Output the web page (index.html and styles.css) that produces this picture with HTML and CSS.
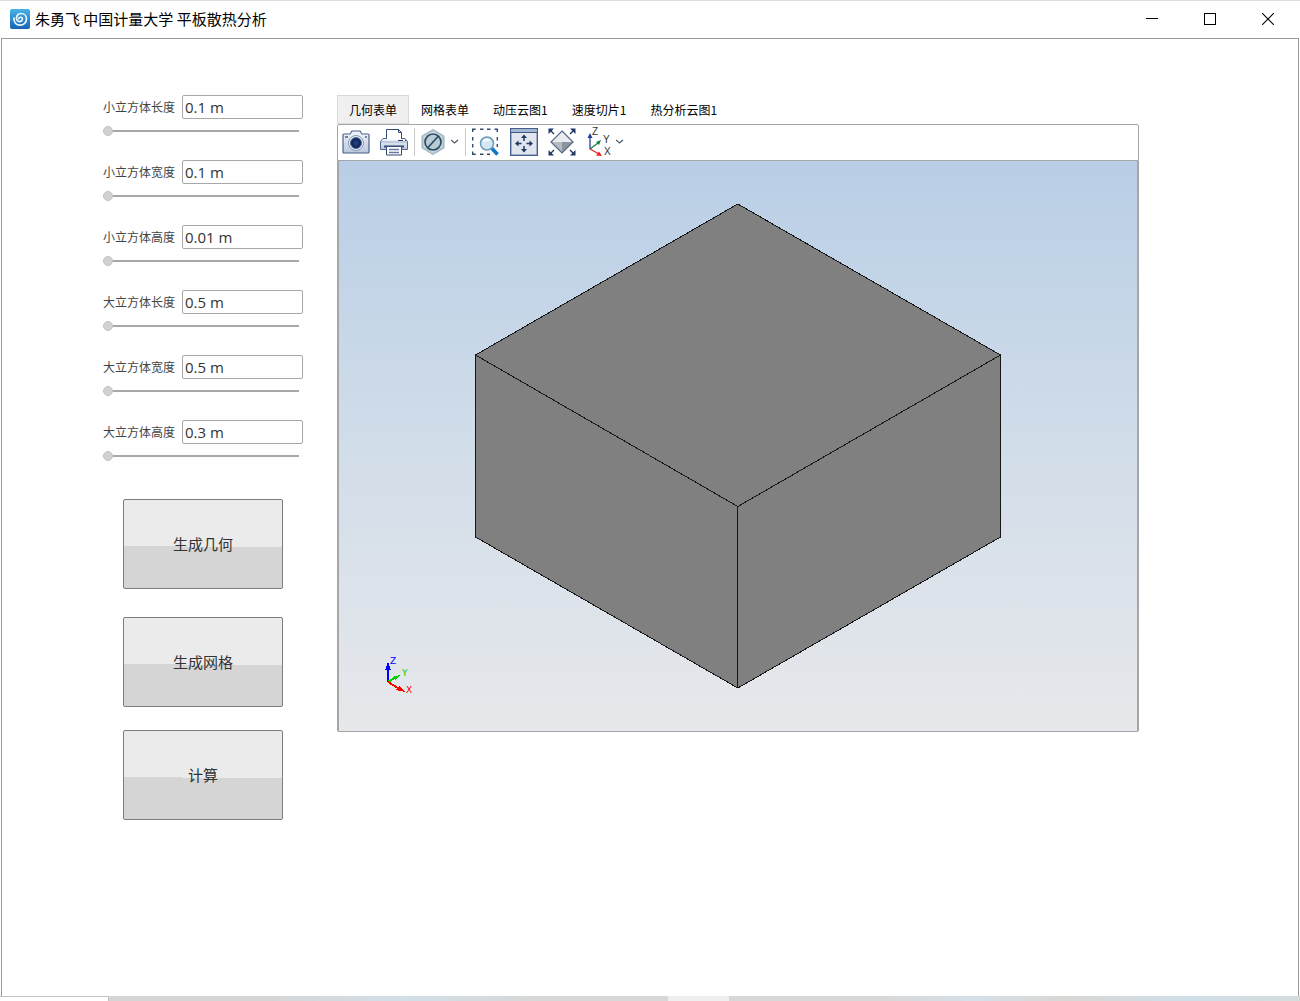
FILE: index.html
```html
<!DOCTYPE html>
<html lang="zh-CN">
<head>
<meta charset="utf-8">
<title>朱勇飞 中国计量大学 平板散热分析</title>
<link rel="stylesheet" href="styles.css">
</head>
<body>
<div class="window">
  <header class="titlebar">
    <svg class="app-icon" width="20" height="20" viewBox="0 0 20 20" aria-hidden="true">
      <defs><linearGradient id="appBg" x1="0" y1="0" x2="0" y2="1"><stop offset="0" stop-color="#48b3e6"/><stop offset="1" stop-color="#1464b4"/></linearGradient></defs>
      <rect width="20" height="20" rx="2" fill="url(#appBg)"/>
      <path d="M8.800 9.600c.2-1.900 3.700-1.900 3.600.5-.1 2.300-3.300 3.300-5 1.500C5.200 9 7 4.500 11 4.500c3.300 0 5.500 2.400 5.500 5.300 0 3.700-2.800 6.400-6.500 6.400-3.800 0-6.400-2.800-6-7" fill="none" stroke="#e8f6ff" stroke-width="1.700" stroke-linecap="round"/>
    </svg>
    <h1 class="title">朱勇飞 中国计量大学 平板散热分析</h1>
    <div class="window-controls">
      <button class="window-button" aria-label="最小化"><svg width="12" height="12" viewBox="0 0 12 12"><path d="M0 5.500h12" stroke="#000"/></svg></button>
      <button class="window-button" aria-label="最大化"><svg width="12" height="12" viewBox="0 0 12 12"><rect x=".5" y=".5" width="11" height="11" fill="none" stroke="#000"/></svg></button>
      <button class="window-button" aria-label="关闭"><svg width="12" height="12" viewBox="0 0 12 12"><path d="M0 0l12 12M12 0L0 12" stroke="#000" stroke-width="1.100"/></svg></button>
    </div>
  </header>

  <main class="client">
    <form class="sidebar">
      <div class="fields">
        <div class="field"><label class="field-label" for="small-length">小立方体长度</label><input class="field-input" id="small-length" type="text" value="0.1 m"><input class="slider" type="range" value="0" aria-label="小立方体长度"></div>
        <div class="field"><label class="field-label" for="small-width">小立方体宽度</label><input class="field-input" id="small-width" type="text" value="0.1 m"><input class="slider" type="range" value="0" aria-label="小立方体宽度"></div>
        <div class="field"><label class="field-label" for="small-height">小立方体高度</label><input class="field-input" id="small-height" type="text" value="0.01 m"><input class="slider" type="range" value="0" aria-label="小立方体高度"></div>
        <div class="field"><label class="field-label" for="large-length">大立方体长度</label><input class="field-input" id="large-length" type="text" value="0.5 m"><input class="slider" type="range" value="0" aria-label="大立方体长度"></div>
        <div class="field"><label class="field-label" for="large-width">大立方体宽度</label><input class="field-input" id="large-width" type="text" value="0.5 m"><input class="slider" type="range" value="0" aria-label="大立方体宽度"></div>
        <div class="field"><label class="field-label" for="large-height">大立方体高度</label><input class="field-input" id="large-height" type="text" value="0.3 m"><input class="slider" type="range" value="0" aria-label="大立方体高度"></div>
      </div>
      <div class="actions">
        <div class="build-actions">
          <button class="action" type="button">生成几何</button>
          <button class="action" type="button">生成网格</button>
        </div>
        <button class="action" type="button">计算</button>
      </div>
    </form>

    <section class="graphics">
      <div class="tabs" role="tablist">
        <button class="tab tab-active" role="tab" aria-selected="true">几何表单</button>
        <button class="tab" role="tab" aria-selected="false">网格表单</button>
        <button class="tab" role="tab" aria-selected="false">动压云图1</button>
        <button class="tab" role="tab" aria-selected="false">速度切片1</button>
        <button class="tab" role="tab" aria-selected="false">热分析云图1</button>
      </div>
      <div class="toolbar" role="toolbar">
        <button class="tool" aria-label="截图">
          <svg width="28" height="28" viewBox="0 0 28 28">
            <defs><linearGradient id="metal" x1="0" y1="0" x2="0" y2="1"><stop offset="0" stop-color="#f4f7fc"/><stop offset="1" stop-color="#b9c6dd"/></linearGradient></defs>
            <path d="M2 6h6l2-3h8l2 3h6q1 0 1 1v17q0 1-1 1H2q-1 0-1-1V7q0-1 1-1z" fill="url(#metal)" stroke="#4a628c" stroke-width="1.200"/>
            <path d="M3 9h3" stroke="#4a628c" stroke-width="1.500"/><circle cx="24" cy="9" r="1" fill="#4a628c"/>
            <circle cx="14" cy="15" r="7.500" fill="#eef3fa" stroke="#8697b5"/><circle cx="14" cy="15" r="5.500" fill="#132a5c" stroke="#4d6797"/><circle cx="14" cy="15" r="2.500" fill="#203f76"/>
          </svg>
        </button>
        <button class="tool" aria-label="打印">
          <svg width="28" height="28" viewBox="0 0 28 28">
            <path d="M6.500 12V1.500h12l3 3V12" fill="#fff" stroke="#344b73"/><path d="M18.500 1.500v3h3" fill="none" stroke="#344b73"/>
            <path d="M3 10.500h22l2.500 3v8H.5v-8z" fill="url(#metal)" stroke="#51678c"/><path d="M7 9h14v2.500H7z" fill="#fff"/>
            <path d="M1 14h26" stroke="#a4b0c6"/><path d="M18 12.500h5M25 12.500h1" stroke="#263c66" stroke-width="1.200"/>
            <path d="M4 18.500h20" stroke="#344b73" stroke-width="2"/><path d="M6.500 18.500h15v8.500h-15z" fill="#fff" stroke="#344b73"/><path d="M9 21.500h10M9 24.500h10" stroke="#647aa0" stroke-width="1.300"/>
          </svg>
        </button>
        <span class="separator"></span>
        <button class="tool tool-menu" aria-label="透明度">
          <svg width="24" height="28" viewBox="0 0 24 28">
            <path d="M12 1.500L23 8v12l-11 6.500L1 20V8z" fill="#bacbd2" stroke="#99afb8"/><path d="M12 4l8.500 5v10L12 24l-8.500-5V9z" fill="#dde7e9"/>
            <circle cx="12" cy="14" r="8" fill="#b9cbd3" stroke="#294c66" stroke-width="1.700"/><path d="M6.500 20L17.500 8" stroke="#294c66" stroke-width="1.700"/>
          </svg>
          <svg class="chevron" width="8" height="6" viewBox="0 0 8 6"><path d="M0 1l3.500 3L7 1" fill="none" stroke="#4d5b69" stroke-width="1.300"/></svg>
        </button>
        <span class="separator"></span>
        <button class="tool" aria-label="框选缩放">
          <svg width="28" height="28" viewBox="0 0 28 28">
            <path d="M.7 4V1.200h3M8 1.200h3.500M15 1.200h3.500M22.500 1.200h2.800V4M25.300 9v3.500M25.300 16v3M.7 9v3.500M.7 16v3.500M.7 23.500v2.800h3M8 26.300h3.500M15 26.300h3" fill="none" stroke="#344a70" stroke-width="1.400"/>
            <circle cx="15" cy="15.500" r="6.500" fill="#d4e8f4" stroke="#689ab9" stroke-width="1.500"/><path d="M11.500 13.500q2.500-3 6-1" stroke="#fff" fill="none" stroke-width="2"/><path d="M20 20.500l5.500 6" stroke="#0877c4" stroke-width="3.500"/>
          </svg>
        </button>
        <button class="tool" aria-label="平移">
          <svg width="28" height="28" viewBox="0 0 28 28">
            <rect x=".7" y=".7" width="26.600" height="26.600" fill="#e1e5ee" stroke="#46608d" stroke-width="1.400"/><path d="M1.400 2.700h25.200" stroke="#a5b6d0" stroke-width="2.600"/><path d="M1 4.500h26" stroke="#405a86"/>
            <path d="M14 13V9M14 18v4M11.500 15.500H8M16.500 15.500H20" stroke="#203966" stroke-width="1.500"/><path d="M14 6.500l3 3.500h-6zM14 24.500l3-3.500h-6zM5 15.500l3.500-3v6zM23 15.500l-3.500-3v6z" fill="#203966"/>
          </svg>
        </button>
        <button class="tool" aria-label="缩放到范围">
          <svg width="28" height="28" viewBox="0 0 28 28">
            <path d="M14 3l11 11H3z" fill="#e9ebef"/><path d="M3 14h11v11z" fill="#b4bbc2"/><path d="M14 14h11L14 25z" fill="#8d969f"/><path d="M14 3l11 11-11 11L3 14z" fill="none" stroke="#536887" stroke-width="1.200"/>
            <path d="M2 2l4 4M26 2l-4 4M2 26l4-4M26 26l-4-4" stroke="#203966" stroke-width="1.400"/><path d="M.5.500H6l-5.500 5.500zM27.500.500H22l5.500 5.500zM.5 27.500H6L.5 22zM27.500 27.500H22l5.500-5.500z" fill="#203966"/>
          </svg>
        </button>
        <button class="tool tool-menu" aria-label="视图方向">
          <svg class="axes-icon" width="24" height="28" viewBox="0 0 24 28">
            <path d="M4 21V8" stroke="#213f99" stroke-width="1.300"/><path d="M4 5l2.500 5h-5z" fill="#213f99"/>
            <path d="M4 21l8-6" stroke="#168346" stroke-width="1.300"/><path d="M15 12l-2 5-3-3z" fill="#168346"/>
            <path d="M4 21l9 5" stroke="#dc252b" stroke-width="1.300"/><path d="M16 28l-6-.5 3-4z" fill="#ed2028"/>
            <text x="6" y="7" class="axis-label">Z</text><text x="17" y="15" class="axis-label">Y</text><text x="18" y="27" class="axis-label">X</text>
          </svg>
          <svg class="chevron" width="8" height="6" viewBox="0 0 8 6"><path d="M0 1l3.500 3L7 1" fill="none" stroke="#4d5b69" stroke-width="1.300"/></svg>
        </button>
      </div>
      <div class="scene">
        <svg class="model" viewBox="0 0 798 570" role="img" aria-label="几何模型">
          <g fill="#808080" stroke="#161616" stroke-linejoin="round" shape-rendering="crispEdges">
            <path d="M398.800 43L661.500 194 398.800 345.500 136.500 194z"/><path d="M136.500 194L398.800 345.500V527L136.500 376z"/><path d="M398.800 345.500L661.500 194v182L398.800 527z"/>
          </g>
          <g stroke-width="2" shape-rendering="crispEdges">
            <path d="M49 521v-14" stroke="#00f"/><path d="M49 501l3 8h-6z" fill="#00f"/>
            <path d="M49 521l8-5" stroke="#00d000"/><path d="M61 514l-8 2 3 3z" fill="#00d000"/>
            <path d="M49 521l10 6" stroke="red"/><path d="M66 531l-9-2 3-4z" fill="red"/>
          </g>
          <g>
            <text x="51" y="503" class="triad-label triad-z">Z</text><text x="63" y="515" class="triad-label triad-y">Y</text><text x="67" y="532" class="triad-label triad-x">X</text>
          </g>
        </svg>
      </div>
    </section>
  </main>
  <footer class="desktop-edge"><span class="edge-window"></span><span class="edge-item"></span></footer>
</div>
</body>
</html>
```
FILE: styles.css
```css
* { box-sizing: border-box; }

body {
  margin: 0;
  background: #fff;
  color: #000;
  font-family: "Noto Sans CJK SC", sans-serif;
}

button, input { font-family: inherit; margin: 0; }
svg { display: block; }

.window {
  display: flex;
  flex-direction: column;
  min-height: 100vh;
}

.titlebar {
  display: flex;
  align-items: center;
  height: 38px;
  padding: 0 3px 2px 10px;
  border-top: 1px solid #dedede;
}

.title {
  flex: 1;
  margin: 0 0 0 5px;
  font-size: 15px;
  font-weight: 400;
  line-height: 22px;
}

.window-controls { display: flex; }

.window-button {
  display: grid;
  place-items: center;
  width: 58px;
  height: 34px;
  padding: 0;
  border: 0;
  background: none;
}

.client {
  flex: 1;
  display: flex;
  align-items: flex-start;
  gap: 34px;
  margin: 0 1px;
  padding: 56px 159px 56px 101px;
  border: 1px solid #999;
  border-bottom: 0;
}

.sidebar { width: 200px; flex: none; }
.fields { display: grid; gap: 21px; }

.field {
  display: grid;
  grid-template-columns: 79px 121px;
  align-items: center;
}

.field-label { color: #444; font-size: 12px; line-height: 24px; }

.field-input {
  height: 24px;
  padding: 0 2px;
  border: 1px solid #a8a8a8;
  border-radius: 2px;
  background: #fff;
  color: #333;
  font-family: "Open Sans", "Noto Sans CJK SC", sans-serif;
  font-size: 15px;
}

.slider {
  grid-column: 1 / -1;
  width: 196px;
  height: 10px;
  margin-top: 7px;
  margin-bottom: 3px;
  appearance: none;
  background: linear-gradient(#a8a8a8, #a8a8a8) center / 100% 2px no-repeat;
}

.slider::-webkit-slider-thumb {
  appearance: none;
  width: 10px;
  height: 10px;
  border: 1px solid #c4c4c4;
  border-radius: 50%;
  background: #d1d1d1;
}

.actions {
  display: grid;
  justify-content: center;
  gap: 23px;
  margin-top: 35px;
}

.build-actions { display: grid; gap: 28px; }

.action {
  width: 160px;
  height: 90px;
  padding: 0 0 2px;
  border: 1px solid #7d7d7d;
  border-radius: 2px;
  background: linear-gradient(180.500deg, #ebebeb 53%, #d5d5d5 53%);
  color: #333;
  font-size: 15px;
}

.graphics { flex: 1; min-width: 0; }
.tabs { display: flex; height: 29px; }

.tab {
  height: 29px;
  padding: 0 12px;
  border: 0;
  background: none;
  color: #000;
  font-size: 12px;
  white-space: nowrap;
}

.tab-active { background: #f0f0f0; box-shadow: inset 0 0 0 1px #d9d9d9; }

.toolbar {
  display: flex;
  align-items: center;
  gap: 10px;
  height: 37px;
  padding: 0 4px 2px;
  border: 1px solid #a6a6a6;
  border-radius: 2px 2px 0 0;
}

.tool { flex: none; padding: 0; border: 0; background: none; }
.tool-menu { display: flex; align-items: center; gap: 6px; }
.separator { width: 1px; height: 28px; margin: 0 -4px; background: #c8c8c8; }
.axes-icon { overflow: visible; }
.axis-label { fill: #333; font-family: "Liberation Sans", sans-serif; font-size: 10px; }

.scene {
  border: 2px solid #a6a6a6;
  border-width: 0 2px 1px;
  border-radius: 0 0 2px 2px;
  background: linear-gradient(#b9cee6, #d1dde9 50%, #e7e8eb);
}

.model { width: 100%; height: auto; }
.triad-label { font-family: "DejaVu Sans", sans-serif; font-size: 9px; }
.triad-z { fill: #00f; }
.triad-y { fill: #00d000; }
.triad-x { fill: red; }

.desktop-edge {
  display: flex;
  height: 5px;
  background: linear-gradient(90deg, #d5d5d5 20%, #d2dfe7 31%, #d7d7d7 42%, #d8d8d8 68%, #d5e0e8 75%, #d9d7d4 82%, #cfdfe8 91%, #d5dcdc);
}

.edge-window { width: 109px; background: #fff; border-top: 1px solid #c2c2c2; border-right: 1px solid #c2c2c2; }
.edge-item { width: 61px; margin-left: 43%; background: #efefef; }
```
